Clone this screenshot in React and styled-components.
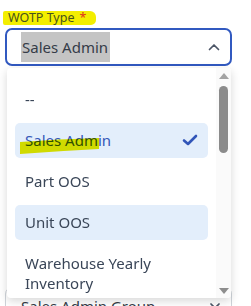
import styled, { createGlobalStyle } from "styled-components";

const GlobalStyle = createGlobalStyle`
  html, body {
    margin: 0;
    padding: 0;
    background: #ffffff;
    font-family: "Noto Sans", "Open Sans", sans-serif;
    color: #3a4453;
  }
`;

const Form = styled.div`
  width: 251px;
  height: 306px;
  overflow: hidden;
  padding: 11px 19px 0 5px;
  box-sizing: border-box;
`;

const Field = styled.div`
  position: relative;
  display: flex;
  flex-direction: column;
  margin-top: ${(p) => p.$offset || 0}px;
`;

const Label = styled.label`
  align-self: flex-start;
  height: 14px;
  line-height: 14px;
  font-size: 12.5px;
  margin-left: -2px;
  padding: 0 10px 0 5px;
  color: ${(p) => (p.$marked ? "#47521c" : "#3a4453")};
  background: ${(p) => (p.$marked ? "#f3ee00" : "transparent")};
  border-radius: 2px 6px 5px 2px;

  span {
    color: #e0301e;
    margin-left: 5px;
  }
`;

const SelectBox = styled.div`
  margin-top: 3px;
  height: 38px;
  box-sizing: border-box;
  border: ${(p) => (p.$open ? "2px solid #3159c0" : "1px solid #cfd4da")};
  border-radius: 7px;
  display: flex;
  align-items: center;
  justify-content: space-between;
  padding: 0 10px 0 ${(p) => (p.$open ? 14 : 15)}px;
  font-size: 15px;
`;

const Picked = styled.span`
  background: #c4c4c4;
  height: 30px;
  line-height: 30px;
  padding: 0 2px 0 1px;
  color: #353c48;
`;

const Plain = styled.span`
  color: #353c48;
`;

const Dropdown = styled.div`
  position: absolute;
  top: 57px;
  left: 2px;
  width: 224px;
  height: 230px;
  background: #ffffff;
  border-radius: 4px;
  box-shadow: 0 3px 10px rgba(0, 0, 0, 0.16);
  display: flex;
  overflow: hidden;
  z-index: 2;
`;

const List = styled.ul`
  list-style: none;
  margin: 0;
  padding: 14px 8px 0 8px;
  flex: 1;
  display: flex;
  flex-direction: column;
  gap: 6px;
`;

const Option = styled.li`
  position: relative;
  min-height: 35px;
  box-sizing: border-box;
  padding: 7px 10px 8px 10px;
  border-radius: 5px;
  font-size: 15px;
  line-height: 20px;
  display: flex;
  align-items: center;
  justify-content: space-between;
  background: ${(p) => (p.$active ? "#e3eefb" : "transparent")};
  color: ${(p) => (p.$selected ? "#3557b8" : "#3a4658")};
  flex-shrink: 0;
`;

const Marker = styled.svg`
  position: absolute;
  left: 4px;
  top: 14px;
  mix-blend-mode: multiply;
  pointer-events: none;
`;

const ScrollTrack = styled.div`
  width: 15px;
  background: #fafafa;
  display: flex;
  flex-direction: column;
  align-items: center;
  padding-top: 5px;
  box-sizing: border-box;
`;

const Arrow = styled.div`
  width: 0;
  height: 0;
  border-left: 5px solid transparent;
  border-right: 5px solid transparent;
  ${(p) =>
    p.$down
      ? "border-top: 6px solid #8d8d8d; margin-top: auto; margin-bottom: 4px;"
      : "border-bottom: 6px solid #a3a3a3;"}
`;

const Thumb = styled.div`
  width: 9px;
  height: 67px;
  margin-top: 7px;
  border-radius: 5px;
  background: #8b8b8b;
`;

const Chevron = ({ up }) => (
  <svg width="12" height="8" viewBox="0 0 12 8">
    <path
      d={up ? "M1.5 6.5 L6 2 L10.5 6.5" : "M2 2 L6 6 L10 2"}
      fill="none"
      stroke="#4b5566"
      strokeWidth="1.7"
      strokeLinecap="round"
      strokeLinejoin="round"
    />
  </svg>
);

const Check = () => (
  <svg width="16" height="12" viewBox="0 0 16 12">
    <path
      d="M2 6.5 L6 10 L14 2"
      fill="none"
      stroke="#3155b8"
      strokeWidth="2.6"
      strokeLinecap="round"
      strokeLinejoin="round"
    />
  </svg>
);

const options = [
  { label: "--" },
  { label: "Sales Admin", selected: true },
  { label: "Part OOS" },
  { label: "Unit OOS", hover: true },
  { label: "Warehouse Yearly Inventory" },
];

export default function App() {
  return (
    <Form>
      <GlobalStyle />
      <Field>
        <Label $marked>
          WOTP Type<span>*</span>
        </Label>
        <SelectBox $open>
          <Picked>Sales Admin</Picked>
          <Chevron up />
        </SelectBox>

        <Dropdown>
          <List>
            {options.map((o) => (
              <Option key={o.label} $active={o.selected || o.hover} $selected={o.selected}>
                <span>{o.label}</span>
                {o.selected && (
                  <>
                    <Check />
                    <Marker width="82" height="17" viewBox="0 0 82 17">
                      <path d="M1 5 Q40 2 80 1 L80 12 Q40 14 1 17 Z" fill="#eaea00" />
                    </Marker>
                  </>
                )}
              </Option>
            ))}
          </List>
          <ScrollTrack>
            <Arrow />
            <Thumb />
            <Arrow $down />
          </ScrollTrack>
        </Dropdown>
      </Field>

      <Field $offset={204}>
        <Label>Sales Admin Group</Label>
        <SelectBox>
          <Plain>Sales Admin Group</Plain>
          <Chevron />
        </SelectBox>
      </Field>
    </Form>
  );
}
